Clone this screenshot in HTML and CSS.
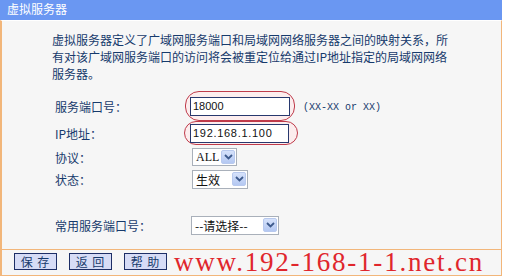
FILE: index.html
```html
<!DOCTYPE html>
<html>
<head>
<meta charset="utf-8">
<link rel="stylesheet" href="styles.css">
</head>
<body>
<div class="panel">
  <div class="title">虚拟服务器</div>
  <div class="body">
    <p class="intro">虚拟服务器定义了广域网服务端口和局域网网络服务器之间的映射关系，所有对该广域网服务端口的访问将会被重定位给通过IP地址指定的局域网网络服务器。</p>
    <div class="form">
      <div class="row r1">
        <div class="label">服务端口号：</div>
        <div class="field">
          <span class="ring ring1"></span>
          <div class="input in1">18000</div>
        </div>
        <div class="hint">(XX-XX or XX)</div>
      </div>
      <div class="row r2">
        <div class="label">IP地址：</div>
        <div class="field">
          <span class="ring ring2"></span>
          <div class="input in2">192.168.1.100</div>
        </div>
      </div>
      <div class="row r3">
        <div class="label">协议：</div>
        <div class="select s1"><span class="opt latin">ALL</span><span class="arrow"><svg width="9" height="6" viewBox="0 0 9 6"><path d="M1 1 L4.5 4.5 L8 1" fill="none" stroke="#3d5a8c" stroke-width="1.8"/></svg></span></div>
      </div>
      <div class="row r4">
        <div class="label">状态：</div>
        <div class="select s2"><span class="opt">生效</span><span class="arrow"><svg width="9" height="6" viewBox="0 0 9 6"><path d="M1 1 L4.5 4.5 L8 1" fill="none" stroke="#3d5a8c" stroke-width="1.8"/></svg></span></div>
      </div>
      <div class="row r5">
        <div class="label">常用服务端口号：</div>
        <div class="select s3"><span class="opt">--请选择--</span><span class="arrow"><svg width="9" height="6" viewBox="0 0 9 6"><path d="M1 1 L4.5 4.5 L8 1" fill="none" stroke="#3d5a8c" stroke-width="1.8"/></svg></span></div>
      </div>
    </div>
  </div>
  <div class="footer">
    <div class="btn">保 存</div>
    <div class="btn">返 回</div>
    <div class="btn">帮 助</div>
    <div class="mark">www.192-168-1-1.net.cn</div>
  </div>
</div>
</body>
</html>
```
FILE: styles.css
```css
html, body {
  margin: 0;
  padding: 0;
  background: #ffffff;
}
body {
  font-family: "Noto Sans CJK SC", "Liberation Sans", sans-serif;
  font-size: 12px;
  color: #163a6c;
}
.panel {
  width: 502px;
}
.title {
  height: 20px;
  line-height: 17px;
  background: #6a97f2;
  color: #ffffff;
  padding-left: 7px;
  font-size: 12px;
}
.body {
  background: #f6f6f6;
  border-left: 2px solid #f2b67a;
  border-right: 1px solid #f2b67a;
  border-top: 1px solid #ffffff;
  height: 229px;
  box-sizing: border-box;
  padding-top: 10px;
}
.intro {
  margin: 0 0 0 50px;
  width: 400px;
  line-height: 17px;
}
.form {
  margin-top: 12px;
  margin-left: 53px;
}
.row {
  display: flex;
  align-items: center;
}
.r1 { height: 24px; }
.r2 { height: 26px; margin-top: 2px; }
.r3 { height: 22px; }
.r4 { height: 22px; }
.r5 { height: 22px; margin-top: 24px; }
.label {
  width: 135px;
  flex: none;
}
.field {
  position: relative;
  width: 100px;
  height: 19px;
}
.ring {
  position: absolute;
  border: 1.5px solid #bf3a4a;
  background: #fcedee;
  border-radius: 14px;
  box-sizing: border-box;
}
.ring1 {
  left: -5px;
  top: -6px;
  width: 110px;
  height: 30px;
}
.ring2 {
  left: -6px;
  top: -3px;
  width: 114px;
  height: 24px;
}
.input {
  position: relative;
  box-sizing: border-box;
  width: 100px;
  height: 19px;
  border: 1px solid #27386e;
  background: #ffffff;
  color: #111111;
  font-family: "Liberation Sans", sans-serif;
  font-size: 11px;
  line-height: 17px;
  padding-left: 2px;
}
.in2 {
  width: 99px;
  letter-spacing: 0.7px;
}
.hint {
  margin-left: 13px;
  font-family: "Liberation Mono", monospace;
  font-size: 10px;
  margin-top: 3px;
}
.select {
  box-sizing: border-box;
  height: 18px;
  border: 1px solid #a9b0ba;
  background: #ffffff;
  display: flex;
  align-items: center;
  justify-content: space-between;
  padding-left: 3px;
  padding-right: 1px;
  color: #111111;
  margin-left: 2px;
}
.s1 { width: 45px; }
.s2 { width: 56px; height: 19px; }
.s3 { width: 88px; height: 19px; margin-left: 1px; }
.latin {
  font-family: "Liberation Serif", serif;
  font-size: 12px;
}
.arrow {
  width: 14px;
  height: 14px;
  box-sizing: border-box;
  border: 1px solid #b8c9ee;
  border-radius: 2px;
  background: linear-gradient(#d6e2fb, #b4c8f2);
  display: flex;
  align-items: center;
  justify-content: center;
}
.footer {
  height: 27px;
  box-sizing: border-box;
  border-top: 1px solid #f2b67a;
  border-bottom: 1px solid #f2b67a;
  border-left: 2px solid #f2b67a;
  border-right: 1px solid #f2b67a;
  background: #f6f6f6;
  display: flex;
  align-items: flex-start;
  padding-left: 12px;
  white-space: nowrap;
}
.btn {
  margin-top: 3px;
  width: 43px;
  height: 17px;
  box-sizing: border-box;
  border: 1px solid #1d2e66;
  background: #d6dcf6;
  text-align: center;
  line-height: 15px;
  font-size: 12px;
  letter-spacing: 1px;
  color: #163a6c;
  margin-right: 12px;
  flex: none;
}
.mark {
  margin-left: -5px;
  font-family: "Liberation Serif", serif;
  font-size: 27px;
  line-height: 25px;
  color: #e0262c;
  letter-spacing: 1.8px;
  flex: none;
}
```
